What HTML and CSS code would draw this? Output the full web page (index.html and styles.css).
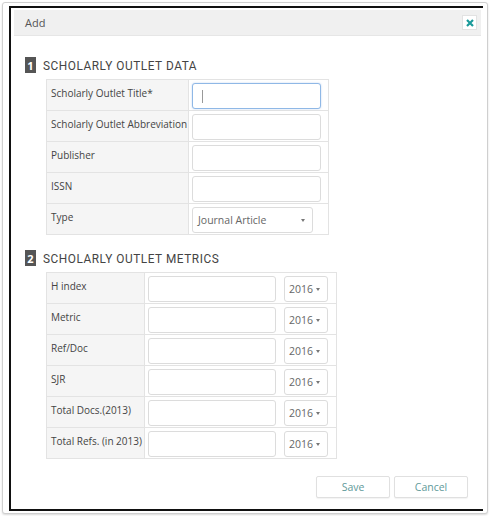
FILE: index.html
```html
<!DOCTYPE html>
<html>
  <head>
    <link rel="stylesheet" href="styles.css">
  </head>
  <body>
    <div class="shot">
      <div class="modal">
        <div class="modal-header">
          <span class="modal-title">Add</span>
          <span class="close-btn">
            <svg width="8" height="8" viewBox="0 0 8 8"><path d="M1 1 L7 7 M7 1 L1 7" stroke="#1a9a9a" stroke-width="2.2"/></svg>
          </span>
        </div>
        <div class="modal-body">
          <div class="section-title"><span class="badge">1</span><span class="heading">SCHOLARLY OUTLET DATA</span></div>
          <div class="grid grid-data">
            <div class="cell label">Scholarly Outlet Title*</div>
            <div class="cell"><div class="field focus"><span class="caret"></span></div></div>
            <div class="cell label">Scholarly Outlet Abbreviation</div>
            <div class="cell"><div class="field"></div></div>
            <div class="cell label">Publisher</div>
            <div class="cell"><div class="field"></div></div>
            <div class="cell label">ISSN</div>
            <div class="cell"><div class="field"></div></div>
            <div class="cell label">Type</div>
            <div class="cell"><div class="field select select-type">Journal Article<span class="arrow"></span></div></div>
          </div>

          <div class="section-title second"><span class="badge">2</span><span class="heading">SCHOLARLY OUTLET METRICS</span></div>
          <div class="grid grid-metrics">
            <div class="cell label">H index</div>
            <div class="cell pair"><div class="field"></div><div class="field select year">2016<span class="arrow"></span></div></div>
            <div class="cell label">Metric</div>
            <div class="cell pair"><div class="field"></div><div class="field select year">2016<span class="arrow"></span></div></div>
            <div class="cell label">Ref/Doc</div>
            <div class="cell pair"><div class="field"></div><div class="field select year">2016<span class="arrow"></span></div></div>
            <div class="cell label">SJR</div>
            <div class="cell pair"><div class="field"></div><div class="field select year">2016<span class="arrow"></span></div></div>
            <div class="cell label">Total Docs.(2013)</div>
            <div class="cell pair"><div class="field"></div><div class="field select year">2016<span class="arrow"></span></div></div>
            <div class="cell label">Total Refs. (in 2013)</div>
            <div class="cell pair"><div class="field"></div><div class="field select year">2016<span class="arrow"></span></div></div>
          </div>

          <div class="actions">
            <button type="button" class="btn">Save</button>
            <button type="button" class="btn">Cancel</button>
          </div>
        </div>
      </div>
    </div>
  </body>
</html>
```

FILE: styles.css
```css
:root {
  --label-bg: #f5f5f5;
  --line: #e3e3e3;
  --field-line: #dcdcdc;
  --text: #444;
  --accent: #5f9a9a;
}

body {
  margin: 0;
  background: #fff;
  font-family: 'Open Sans', 'DejaVu Sans', sans-serif;
  color: var(--text);
}

.shot {
  margin: 2px;
  width: 486px;
  height: 512px;
  box-sizing: border-box;
  border: 1px solid #cfcfcf;
  border-radius: 3px;
  box-shadow: 0 1px 2px rgba(0, 0, 0, 0.15);
  padding: 3px 4px 2px 6px;
  background: #fff;
}

.modal {
  height: 100%;
  box-sizing: border-box;
  border-top: 2px solid #111;
  border-left: 2px solid #111;
  border-bottom: 2px solid #111;
  padding: 2px 2px 0 3px;
}

.modal-header {
  height: 25px;
  background: #f0f0f0;
  border-bottom: 1px solid #e6e6e6;
  display: flex;
  align-items: center;
  justify-content: space-between;
  padding: 0 4px 0 11px;
}

.modal-title {
  font-size: 11px;
  color: #555;
}

.close-btn {
  width: 13px;
  height: 13px;
  background: #fff;
  border: 1px solid #e2e2e2;
  display: flex;
  align-items: center;
  justify-content: center;
}

.modal-body {
  padding: 21px 0 0 11px;
}

.section-title {
  display: flex;
  align-items: center;
  height: 16px;
}

.section-title.second {
  margin-top: 15px;
}

.heading {
  font-family: Roboto, sans-serif;
  font-size: 13px;
  letter-spacing: 0.6px;
  color: #444;
  white-space: nowrap;
  transform: scaleX(0.91);
  transform-origin: left center;
}

.badge {
  width: 11px;
  height: 16px;
  background: #555;
  color: #fff;
  font-weight: bold;
  font-size: 11px;
  display: flex;
  align-items: center;
  justify-content: center;
  margin-right: 7px;
}

.grid {
  display: grid;
  margin: 6px 0 0 21px;
  border: 1px solid var(--line);
  border-bottom: none;
}

.grid-data {
  width: 281px;
  grid-template-columns: 142px 1fr;
}

.grid-metrics {
  width: 289px;
  grid-template-columns: 98px 1fr;
}

.cell {
  border-bottom: 1px solid var(--line);
  padding: 3px 4px 0 3px;
  box-sizing: border-box;
  height: 31px;
}

.label {
  background: var(--label-bg);
  border-right: 1px solid var(--line);
  font-size: 10px;
  padding: 6px 0 0 4px;
  white-space: nowrap;
}

.field {
  height: 26px;
  box-sizing: border-box;
  border: 1px solid var(--field-line);
  border-radius: 3px;
  background: #fff;
  width: 129px;
  position: relative;
  font-size: 10.5px;
  color: #666;
}

.field.focus {
  border-color: #8fb8e6;
  box-shadow: 0 0 2px rgba(100, 150, 220, 0.4);
}

.caret {
  position: absolute;
  left: 9px;
  top: 6px;
  width: 1px;
  height: 13px;
  background: #999;
}

.select {
  display: flex;
  align-items: center;
  padding-left: 5px;
}

.select-type {
  width: 121px;
}

.pair {
  display: flex;
  gap: 8px;
}

.pair .field {
  width: 128px;
}

.pair .field.year {
  width: 44px;
  padding-left: 4px;
}

.select .arrow {
  position: absolute;
  right: 7px;
  top: 11px;
  width: 0;
  height: 0;
  border-left: 2.5px solid transparent;
  border-right: 2.5px solid transparent;
  border-top: 3px solid #777;
}

.actions {
  display: flex;
  justify-content: flex-end;
  gap: 4px;
  margin: 17px 13px 0 0;
}

.btn {
  width: 74px;
  height: 22px;
  background: #fff;
  border: 1px solid #e0e0e0;
  border-radius: 2px;
  box-shadow: 0 1px 1px rgba(0, 0, 0, 0.05);
  font-family: 'Open Sans', sans-serif;
  font-size: 10.5px;
  color: var(--accent);
  cursor: pointer;
}
```
